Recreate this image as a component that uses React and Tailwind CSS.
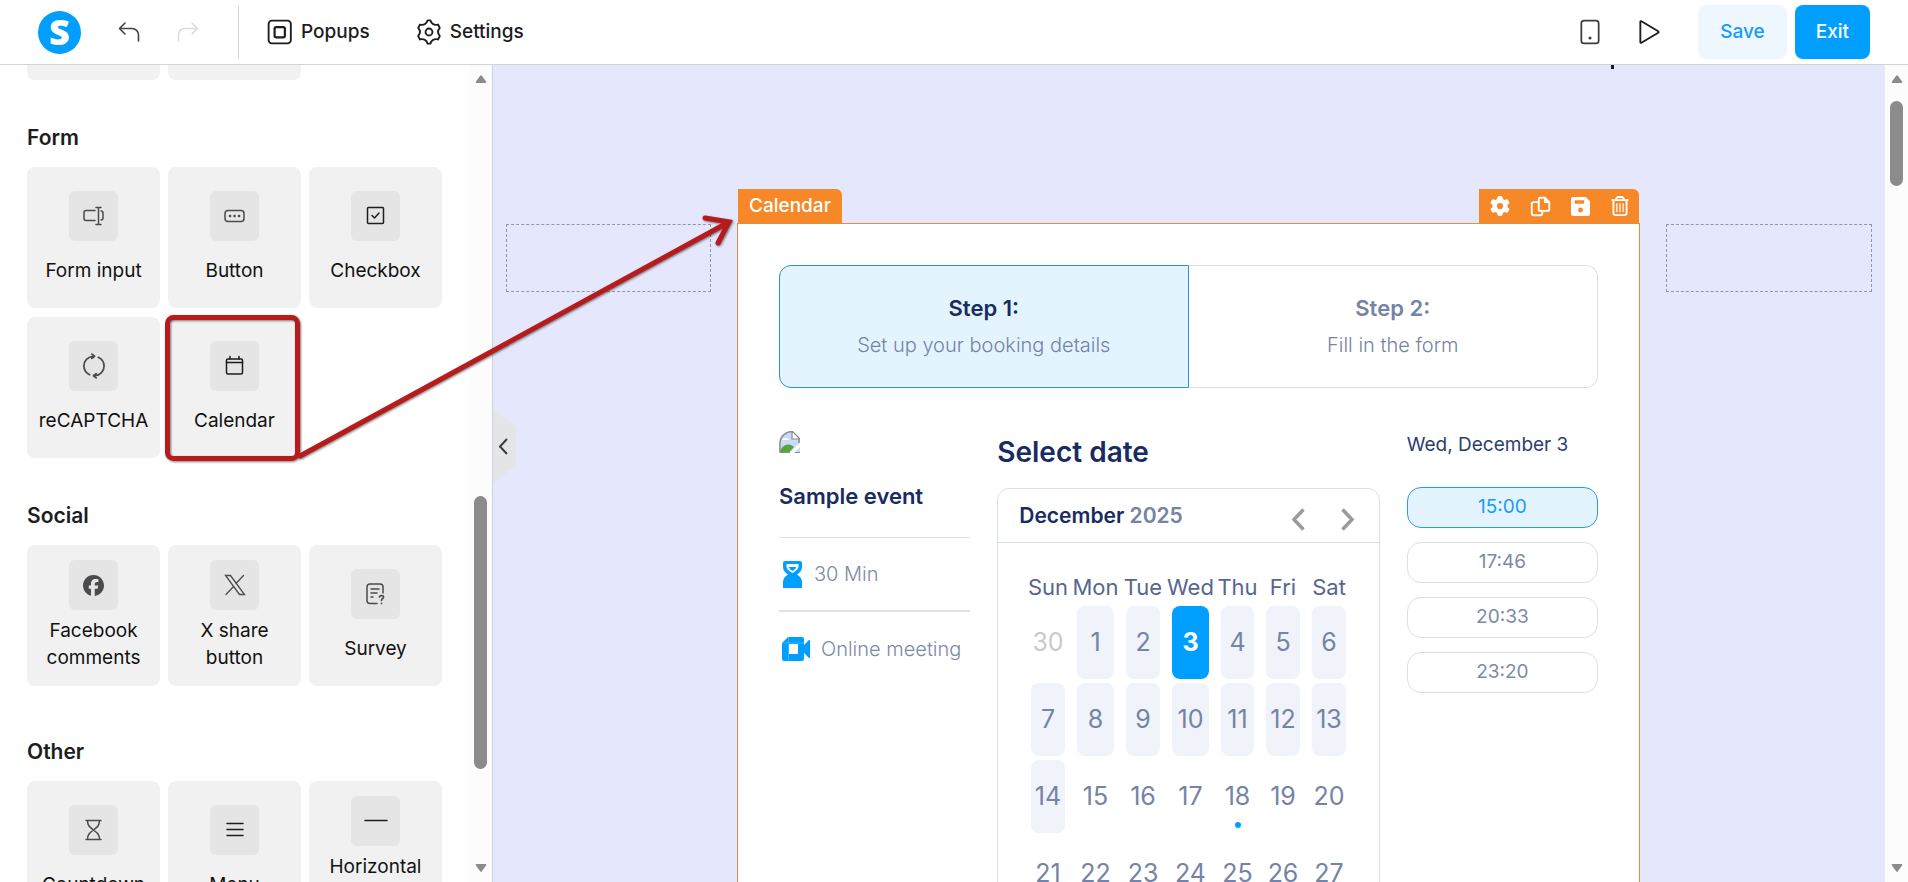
import React, { useState } from "react";
import { FaGear, FaFacebook, FaRegTrashCan } from "react-icons/fa6";

function Icon({ size = 24, stroke = 1.5, className = "", children }) {
  return (
    <svg
      width={size}
      height={size}
      viewBox="0 0 24 24"
      fill="none"
      stroke="currentColor"
      strokeWidth={stroke}
      strokeLinecap="round"
      strokeLinejoin="round"
      className={className}
      aria-hidden="true"
    >
      {children}
    </svg>
  );
}

const icons = {
  input: (
    <Icon className="text-[#4b4b4d]">
      <path d="M13 6.500H4a2 2 0 0 0-2 2v6a2 2 0 0 0 2 2h9M19 7a2 2 0 0 1 2 2v5a2 2 0 0 1-2 2M16.500 4v16M14 3.500h5M14 20.500h5" />
    </Icon>
  ),
  button: (
    <Icon className="text-[#4b4b4d]">
      <rect x="2" y="6.500" width="19" height="11" rx="3" />
      <path d="M7 12h.1M11.500 12h.1M16 12h.1" strokeWidth="2.500" />
    </Icon>
  ),
  checkbox: (
    <Icon className="text-[#1d1d1f]">
      <rect x="3.500" y="3.500" width="16" height="16" rx="1" />
      <path d="m8 11.500 2.500 2.500 4.500-5" />
    </Icon>
  ),
  recaptcha: (
    <Icon size={26} stroke={1.6} className="text-[#4b4b4d]">
      <path d="M8 20C4.500 18.300 2.700 15.300 2.700 12c0-4.700 3.300-8.500 8.800-9M10 1l2.500 2L10 5" />
      <path d="M16 4c3.500 1.700 5.300 4.700 5.300 8 0 4.700-3.300 8.500-8.800 9M14 23l-2.500-2L14 19" />
    </Icon>
  ),
  calendar: (
    <Icon className="text-[#1d1d1f]">
      <rect x="3.500" y="5" width="16" height="15" rx="1.500" />
      <path d="M3.500 8.500h16M7 2.500V5M16 2.500V5" />
    </Icon>
  ),
  facebook: <FaFacebook size={21} className="text-[#4b4b4d]" />,
  x: (
    <Icon stroke={1.3} className="text-[#4b4b4d]">
      <path d="M2.500 2.500h5l14 19h-5zM20.500 2.500l-7.600 8M10.600 13.500 3 21.500" strokeLinejoin="miter" />
    </Icon>
  ),
  survey: (
    <Icon className="text-[#4b4b4d]">
      <path d="M13 21.500H6a3 3 0 0 1-3-3V5a3 3 0 0 1 3-3h10a3 3 0 0 1 3 3v6M7 7h8M7 11h6M7 15h2" />
      <path d="M15.500 15c.3-2 4-2 4 0 0 1.700-2 1.500-2 3.300M17.500 21.300v.1" strokeWidth="1.700" />
    </Icon>
  ),
  countdown: (
    <Icon className="text-[#4b4b4d]">
      <path d="M4 2.500h15M4 21.500h15M5.500 2.500c0 5 2 6.500 6 9.500 4-3 6-4.500 6-9.500M5.500 21.500c0-5 2-6.500 6-9.500 4 3 6 4.500 6 9.500" />
    </Icon>
  ),
  menu: (
    <Icon className="text-[#1d1d1f]">
      <path d="M4 5.500h16M4 11.500h16M4 17.500h16" />
    </Icon>
  ),
  line: (
    <Icon className="text-[#1d1d1f]">
      <path d="M1 11.500h22" />
    </Icon>
  ),
};

const formWidgets = [
  { label: "Form input", icon: "input" },
  { label: "Button", icon: "button" },
  { label: "Checkbox", icon: "checkbox" },
  { label: "reCAPTCHA", icon: "recaptcha" },
  { label: "Calendar", icon: "calendar" },
];

const socialWidgets = [
  { label: "Facebook comments", icon: "facebook" },
  { label: "X share button", icon: "x" },
  { label: "Survey", icon: "survey" },
];

const otherWidgets = [
  { label: "Countdown", icon: "countdown" },
  { label: "Menu", icon: "menu" },
  { label: "Horizontal line", icon: "line" },
];

const weekdays = ["Sun", "Mon", "Tue", "Wed", "Thu", "Fri", "Sat"];
const weeks = [
  [30, 1, 2, 3, 4, 5, 6],
  [7, 8, 9, 10, 11, 12, 13],
  [14, 15, 16, 17, 18, 19, 20],
  [21, 22, 23, 24, 25, 26, 27],
];
const times = ["15:00", "17:46", "20:33", "23:20"];

function Widget({ label, icon }) {
  const twoLines = label.includes(" ") && label !== "Form input";
  return (
    <button
      className={`flex h-[141px] flex-col items-center rounded-lg bg-[#f1f1f1] px-3 text-[19px] leading-[27px] text-[#111] ${
        twoLines ? "gap-[7px] pt-[15px]" : "gap-4 pt-6"
      }`}
    >
      <span className="flex h-[50px] w-[49px] shrink-0 items-center justify-center rounded-md bg-[#e5e5e5]">
        {icons[icon]}
      </span>
      <span className={twoLines ? "" : "whitespace-nowrap"}>{label}</span>
    </button>
  );
}

function Section({ title, items, className }) {
  return (
    <section className={className}>
      <h2 className="mb-[15px] text-[21px] leading-7 font-semibold text-[#1d1d1f]">{title}</h2>
      <div className="grid grid-cols-3 gap-x-2 gap-y-[9px]">
        {items.map((w) => (
          <Widget key={w.label} {...w} />
        ))}
      </div>
    </section>
  );
}

function ScrollArrow({ down }) {
  return (
    <svg width="12" height="10" viewBox="0 0 12 10" className="shrink-0 fill-[#8b8b8b]" aria-hidden="true">
      <path
        d={down ? "M1.500 1h9a.8.8 0 0 1 .7 1.300l-4.300 6a1 1 0 0 1-1.800 0L.8 2.300A.8.8 0 0 1 1.500 1z" : "M1.500 9h9a.8.8 0 0 0 .7-1.300l-4.300-6a1 1 0 0 0-1.800 0L.8 7.700A.8.8 0 0 0 1.500 9z"}
      />
    </svg>
  );
}

function Scrollbar({ thumb }) {
  return (
    <div className="flex w-[23px] shrink-0 flex-col items-center justify-between bg-[#fcfcfc] pt-[9px] pb-[9px]">
      <ScrollArrow />
      <div className="flex w-full flex-1 flex-col items-center">
        <div className={`w-[13px] rounded-full bg-[#8b8b8b] ${thumb}`} />
      </div>
      <ScrollArrow down />
    </div>
  );
}

function Header() {
  return (
    <header className="flex h-[65px] shrink-0 items-center border-b border-[#d3d3d8] bg-white px-[38px] text-[19px] font-medium text-[#1d1d1f]">
      <a href="#home" aria-label="Home">
        <svg width="43" height="43" viewBox="0 0 43 43" className="overflow-visible">
          <circle cx="21.5" cy="21.5" r="21.5" fill="#009fff" />
          <text x="21.5" y="34" textAnchor="middle" fill="#fff" fontFamily="'Open Sans', sans-serif" fontWeight="800" fontSize="36">
            S
          </text>
        </svg>
      </a>
      <button className="ml-9" aria-label="Undo">
        <Icon stroke={1.6} className="text-[#444]">
          <path d="M8 3 2.500 8.500 8 14M2.500 8.500H15a6.500 6.500 0 0 1 6.500 6.500v6" />
        </Icon>
      </button>
      <button className="ml-[35px]" aria-label="Redo" disabled>
        <Icon stroke={1.6} className="text-[#dcdcdc]">
          <path d="m16 3 5.500 5.500L16 14M21.500 8.500H9A6.500 6.500 0 0 0 2.500 15v6" />
        </Icon>
      </button>
      <div className="ml-[38px] h-[53px] w-px bg-[#d3d3d8]" />
      <button className="ml-7 flex items-center gap-2">
        <Icon size={26} stroke={1.7}>
          <rect x="1.500" y="1.500" width="20.500" height="21" rx="3" />
          <rect x="7" y="7.500" width="9.500" height="9.500" rx="1.500" strokeWidth="2" />
        </Icon>
        Popups
      </button>
      <button className="ml-[46px] flex items-center gap-2">
        <Icon size={26} stroke={1.7}>
          <path d="M10.700 1.200h2.600C14 4.600 17 6 20.300 5.100L22 8.300C20 10.500 20 13.500 22 15.700L20.300 18.900C17 18 14 19.400 13.300 22.800H10.700C10 19.400 7 18 3.700 18.900L2 15.700C4 13.500 4 10.500 2 8.300L3.700 5.100C7 6 10 4.600 10.700 1.200z" />
          <circle cx="12" cy="12" r="3.200" />
        </Icon>
        Settings
      </button>
      <div className="flex-1" />
      <button aria-label="Mobile view">
        <Icon size={26} stroke={1.6} className="text-[#3c3c3e]">
          <rect x="4" y="1.500" width="16" height="21" rx="2.500" />
          <path d="M12 17.500v.1" strokeWidth="2.800" />
        </Icon>
      </button>
      <button className="ml-[33px]" aria-label="Preview">
        <Icon size={26} stroke={1.7}>
          <path d="M4 2.500v19a.6.600 0 0 0 1 .4l15.500-9.200a.8.8 0 0 0 0-1.400L5 2.100a.6.600 0 0 0-1 .4z" />
        </Icon>
      </button>
      <button className="ml-9 h-[54px] rounded-lg bg-[#eef7ff] px-[22px] text-[#159aff]">Save</button>
      <button className="ml-2 h-[54px] rounded-lg bg-[#009fff] px-[21px] text-white">Exit</button>
    </header>
  );
}

function Sidebar() {
  return (
    <aside className="flex w-[493px] shrink-0 border-r border-[#cfd1dc] bg-white">
      <div className="flex-1 overflow-hidden px-[27px]">
        <div className="grid grid-cols-3 gap-2 pb-11">
          <div className="h-[15px] rounded-b-lg bg-[#f1f1f1]" />
          <div className="h-[15px] rounded-b-lg bg-[#f1f1f1]" />
        </div>
        <Section title="Form" items={formWidgets} className="pb-11" />
        <Section title="Social" items={socialWidgets} className="pb-[52px]" />
        <Section title="Other" items={otherWidgets} />
      </div>
      <Scrollbar thumb="mt-[412px] h-[273px]" />
    </aside>
  );
}

function EventInfo() {
  return (
    <div className="text-[20px] text-[#7d89a8]">
      <svg width="21" height="22" viewBox="0 0 21 22" className="mt-[6px]" role="img" aria-label="Event">
        <path d="M0 22V13C0 5 5 0 13 0l8 7v15z" fill="#c9dbf6" />
        <path d="M1 13C1 6 6 1 13 .500l7 7V12M1 13v8.500" fill="none" stroke="#8d8d8d" strokeWidth="1.500" />
        <path d="M13 0v8h8z" fill="#fff" stroke="#8d8d8d" strokeWidth="1.200" />
        <path d="M3 9c1-3 6-3 7 0z" fill="#fff" />
        <path d="M1 21c2-7 8-10 14-5l-5 5.500z" fill="#55a63a" />
        <path d="M10 22 21 12v4l-6 6z" fill="#fff" />
        <path d="M1 21.500h10M16 21.500h5" stroke="#8d8d8d" />
      </svg>
      <h3 className="mt-[29px] text-[22px] leading-7 font-semibold text-[#182c61]">Sample event</h3>
      <div className="mt-[27px] flex h-[73px] items-center gap-3 border-t border-[#dfe3e8] pl-1 font-light">
        <svg width="19" height="27" viewBox="0 0 19 27" fill="#009fff" aria-hidden="true">
          <path d="M2 0h15a2 2 0 0 1 2 2v4c0 3-2 6-5 7.500 3 1.500 5 4.500 5 7.500v6H0v-6c0-3 2-6 5-7.500C2 12 0 9 0 6V2a2 2 0 0 1 2-2z" />
          <path d="M3.500 3h12v3c-1 3-3 4.500-6 6-3-1.500-5-3-6-6z" fill="#fff" />
          <path d="M5.500 6h8c-1 2-2.500 3-4 4-1.500-1-3-2-4-4z" />
        </svg>
        30 Min
      </div>
      <div className="flex h-[76px] items-center gap-[11px] border-t-2 border-[#dfe3e8] pl-[3px] font-light">
        <svg width="28" height="24" viewBox="0 0 28 24" fill="#009fff" className="shrink-0" aria-hidden="true">
          <path d="M6 0h14a2 2 0 0 1 2 2v6l5-5h1v18h-1l-5-5v6a2 2 0 0 1-2 2H2a2 2 0 0 1-2-2V6z" />
          <rect x="7" y="7" width="9" height="10" fill="#fff" />
          <path d="M0 6h22M6.500 0v24" stroke="#6cc5ff" strokeWidth=".5" />
        </svg>
        <span className="whitespace-nowrap">Online meeting</span>
      </div>
    </div>
  );
}

function DatePicker({ selected, onSelect }) {
  return (
    <div>
      <h2 className="mt-[9px] text-[28px] leading-9 font-semibold text-[#182c61]">Select date</h2>
      <div className="mt-[18px] h-[560px] rounded-xl border border-[#dbe0e5]">
        <div className="flex h-[54px] items-center border-b border-[#d5dfe2] pr-6 pl-[21px]">
          <p className="flex-1 text-[21px] font-semibold text-[#182c61]">
            December <span className="text-[#7583a6]">2025</span>
          </p>
          <button className="mt-2" aria-label="Previous month">
            <svg width="14" height="23" viewBox="0 0 14 23" fill="none" stroke="#9b9b9b" strokeWidth="3.500">
              <path d="M12.500 1.500 3 11.500l9.500 10" />
            </svg>
          </button>
          <button className="mt-2 ml-9" aria-label="Next month">
            <svg width="14" height="23" viewBox="0 0 14 23" fill="none" stroke="#9b9b9b" strokeWidth="3.500">
              <path d="M1.500 1.500 11 11.500l-9.500 10" />
            </svg>
          </button>
        </div>
        <table className="mx-auto mt-6 table-fixed">
          <colgroup>
            <col className="w-[46px]" />
            <col className="w-[49px]" />
            <col className="w-[46px]" />
            <col className="w-[49px]" />
            <col className="w-[45px]" />
            <col className="w-[46px]" />
            <col className="w-[46px]" />
          </colgroup>
          <thead>
            <tr className="h-[37px] text-[22px] text-[#57668f]">
              {weekdays.map((d) => (
                <th key={d} className="p-0 font-normal">
                  <div className="flex justify-center pt-1">{d}</div>
                </th>
              ))}
            </tr>
          </thead>
          <tbody>
            {weeks.map((week, i) => (
              <tr key={i} className="text-[25px] text-[#7583a6]">
                {week.map((day) => {
                  let look = "";
                  if (day === selected) look = "bg-[#009fff] font-bold text-white";
                  else if (day === 30) look = "text-[#c9c9c9]";
                  else if (day <= 14) look = "bg-[#f0f3f9]";
                  return (
                    <td key={day} className="px-[6px] py-[2px]">
                      <button
                        onClick={() => onSelect(day)}
                        className={`relative flex h-[73px] w-full items-center justify-center rounded-lg ${look}`}
                      >
                        {day}
                        {day === 18 && <i className="absolute bottom-[5px] h-[6px] w-[6px] rounded-full bg-[#009fff]" />}
                      </button>
                    </td>
                  );
                })}
              </tr>
            ))}
          </tbody>
        </table>
      </div>
    </div>
  );
}

function TimeSlots({ time, onPick }) {
  return (
    <div>
      <p className="mt-[6px] text-[19px] leading-7 text-[#2c3e70]">Wed, December 3</p>
      <div className="mt-7 flex flex-col gap-[14px]">
        {times.map((t) => (
          <button
            key={t}
            onClick={() => onPick(t)}
            className={`h-[41px] rounded-[14px] border text-[19px] ${
              t === time
                ? "border-[#2a9de0] bg-[#e3f4ff] text-[#1a9cf5]"
                : "border-[#dbe0e5] text-[#7d89a8]"
            }`}
          >
            {t}
          </button>
        ))}
      </div>
    </div>
  );
}

function CalendarBlock() {
  const [selected, setSelected] = useState(3);
  const [time, setTime] = useState("15:00");

  return (
    <div>
      <div className="flex justify-between px-px text-white">
        <span className="flex h-[34px] items-center rounded-tr-md bg-[#f68828] px-[11px] text-[19px] font-medium">Calendar</span>
        <div className="flex h-[34px] items-center gap-5 rounded-tr-md bg-[#f68828] pr-[9px] pl-[11px]">
          <button aria-label="Edit">
            <FaGear size={20} />
          </button>
          <button aria-label="Duplicate">
            <Icon size={21} stroke={2.2}>
              <path d="M9 7H4a2 2 0 0 0-2 2v11a2 2 0 0 0 2 2h8a2 2 0 0 0 2-2v-2" />
              <path d="M17 2h-5a2 2 0 0 0-2 2v11a2 2 0 0 0 2 2h8a2 2 0 0 0 2-2V7zM17 2v5h5" />
            </Icon>
          </button>
          <button aria-label="Save block">
            <svg width="19" height="19" viewBox="0 0 18 18" fill="currentColor">
              <path
                fillRule="evenodd"
                d="M2 0h12l4 4v12a2 2 0 0 1-2 2H2a2 2 0 0 1-2-2V2a2 2 0 0 1 2-2zm1.500 3v3.500h9V3zM9 10a2.300 2.300 0 1 0 0 4.600A2.300 2.300 0 0 0 9 10z"
              />
            </svg>
          </button>
          <button aria-label="Delete">
            <FaRegTrashCan size={20} />
          </button>
        </div>
      </div>
      <div className="border border-[#dd8d4c] bg-white px-[41px] pt-[41px]">
        <div className="grid h-[123px] grid-cols-2 text-center">
          <button className="rounded-l-xl border border-[#2a93cc] bg-[#e3f4ff]">
            <b className="block text-[22px] leading-7 font-semibold text-[#182c61]">Step 1:</b>
            <span className="mt-[9px] block text-[20px] leading-7 font-light text-[#7583a6]">Set up your booking details</span>
          </button>
          <button className="rounded-r-xl border border-l-0 border-[#dbe0e5]">
            <b className="block text-[22px] leading-7 font-semibold text-[#7583a6]">Step 2:</b>
            <span className="mt-[9px] block text-[20px] leading-7 font-light text-[#7583a6]">Fill in the form</span>
          </button>
        </div>
        <div className="mt-[37px] grid grid-cols-[191fr_382fr_191fr] gap-[27px]">
          <EventInfo />
          <DatePicker selected={selected} onSelect={setSelected} />
          <TimeSlots time={time} onPick={setTime} />
        </div>
      </div>
    </div>
  );
}

function Canvas() {
  return (
    <main className="relative flex min-w-0 flex-1">
      <div className="flex-1 overflow-hidden bg-[#e5e7fc] px-[13px]">
        {/* tail of the heading scrolled out of view */}
        <div className="flex h-[124px] justify-end pr-[258px]">
          <div className="h-1 w-[3px] bg-[#1b1b2b]" />
        </div>
        <div className="grid grid-cols-[205fr_903fr_206fr] gap-[26px]">
          <div className="mt-[35px] h-[68px] border border-dashed border-[#9395ab]" />
          <CalendarBlock />
          <div className="mt-[35px] h-[68px] border border-dashed border-[#9395ab]" />
        </div>
      </div>
      <Scrollbar thumb="mt-[17px] h-[85px]" />
      <button
        aria-label="Collapse panel"
        className="absolute top-[344px] left-0 flex h-[74px] w-[23px] items-center justify-center bg-[#e3e5e6] pr-1 [clip-path:polygon(0_0,100%_24%,100%_76%,0_100%)]"
      >
        <svg width="10" height="17" viewBox="0 0 10 17" fill="none" stroke="#3c3c3e" strokeWidth="2">
          <path d="M9 1 2 8.500 9 16" />
        </svg>
      </button>
    </main>
  );
}

export default function App() {
  return (
    <div className="relative flex h-screen flex-col overflow-hidden font-['Inter',sans-serif]">
      <Header />
      <div className="flex min-h-0 flex-1">
        <Sidebar />
        <Canvas />
      </div>
      {/* pointer from the widget tile to the block on the canvas */}
      <svg
        width="760"
        height="480"
        viewBox="0 0 760 480"
        className="pointer-events-none absolute top-0 left-0 drop-shadow-[1px_1px_1px_rgba(0,0,0,0.5)]"
        fill="none"
        stroke="#b71b1c"
        strokeWidth="5"
        strokeLinecap="round"
        aria-hidden="true"
      >
        <rect x="167.500" y="317.500" width="130" height="141" rx="6" />
        <path d="M300 456 729 222M705 218l24 4-11 21" />
      </svg>
    </div>
  );
}
